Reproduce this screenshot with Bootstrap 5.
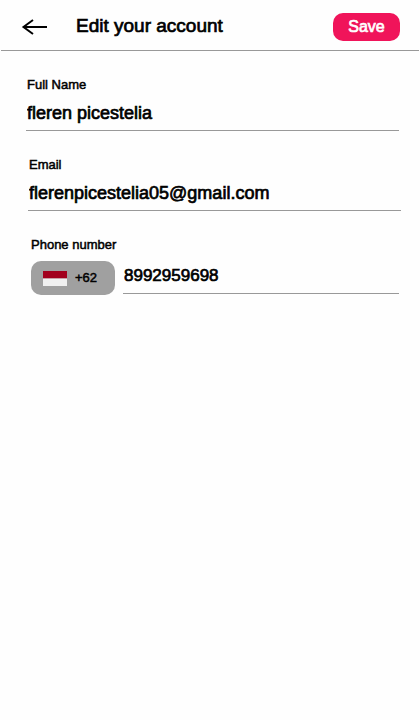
<!DOCTYPE html>
<html lang="en">
<head>
<meta charset="utf-8">
<meta name="viewport" content="width=device-width, initial-scale=1">
<title>Edit your account</title>
<link href="https://cdn.jsdelivr.net/npm/bootstrap@5.3.0/dist/css/bootstrap.min.css" rel="stylesheet">
<style>
body{font-family:"Liberation Sans",Arial,sans-serif;color:#000;background:#fefefe;-webkit-text-stroke:.7px currentColor}
.topbar{height:51px;border-bottom:1px solid #999;margin:0 1px;padding:3px 19px 0 20px}
.page-title{font-size:19px;line-height:24px;margin-left:28px;padding-bottom:2px}
.back-btn{line-height:0}
.save-btn{--bs-btn-color:#fff;--bs-btn-bg:#f0145a;--bs-btn-border-color:#f0145a;--bs-btn-hover-color:#fff;--bs-btn-hover-bg:#d90f50;width:67px;height:28px;border-radius:10px;font-size:16px;line-height:20px}
.account-form{padding:24px 21px 0 26px}
.field{margin-bottom:24px}
.field-email{margin-left:2px;margin-right:-2px}
.field-phone{margin-left:5px}
.field label,.code-btn{font-size:13px;-webkit-text-stroke:.5px currentColor}
.field label{display:block;line-height:20px;padding-left:1px}
.field-phone label{padding-left:0}
.line-input{border:0;border-bottom:1px solid #999;border-radius:0;background:transparent;padding:2px 0 0 1px;height:36px;font-size:18px;color:#000}
.line-input:focus{color:#000;background:transparent;box-shadow:none;border-color:#f0145a}
.field-phone .line-input{font-size:17px;height:35px;padding:0 0 0 1px}
.code-btn{--bs-btn-bg:#a0a0a0;--bs-btn-color:#000;--bs-btn-hover-bg:#929292;--bs-btn-hover-color:#000;width:84px;height:34px;border-radius:10px;padding:0 0 0 12px;margin-top:6px}
</style>
<script src="https://cdn.jsdelivr.net/npm/bootstrap@5.3.0/dist/js/bootstrap.bundle.min.js"></script>
</head>
<body>
<header class="topbar d-flex align-items-center">
  <button type="button" class="back-btn btn border-0 p-0" aria-label="Back">
    <svg width="27" height="18" viewBox="0 0 27 18" fill="none" stroke="#000" stroke-width="2"><path d="M12 2 L2.5 9 L12 16 M2 9H26"/></svg>
  </button>
  <h1 class="page-title fw-normal mb-0">Edit your account</h1>
  <button type="submit" form="account" class="save-btn btn border-0 p-0 ms-auto">Save</button>
</header>
<main>
  <form id="account" class="account-form">
    <div class="field">
      <label for="name">Full Name</label>
      <input id="name" class="form-control line-input" type="text" value="fleren picestelia">
    </div>
    <div class="field field-email">
      <label for="email">Email</label>
      <input id="email" class="form-control line-input" type="email" value="flerenpicestelia05@gmail.com">
    </div>
    <div class="field field-phone">
      <label for="phone">Phone number</label>
      <div class="d-flex align-items-start">
        <button type="button" class="code-btn btn border-0 d-flex align-items-center gap-2 flex-shrink-0" aria-label="Country code +62">
          <svg width="24" height="15" viewBox="0 0 24 15"><path fill="#a2001d" d="M0 0h24v7.5H0z"/><path fill="#f0f0f0" d="M0 7.5h24V15H0z"/></svg>
          <span>+62</span>
        </button>
        <input id="phone" class="form-control line-input ms-2 mt-1" type="tel" value="8992959698">
      </div>
    </div>
  </form>
</main>
</body>
</html>
